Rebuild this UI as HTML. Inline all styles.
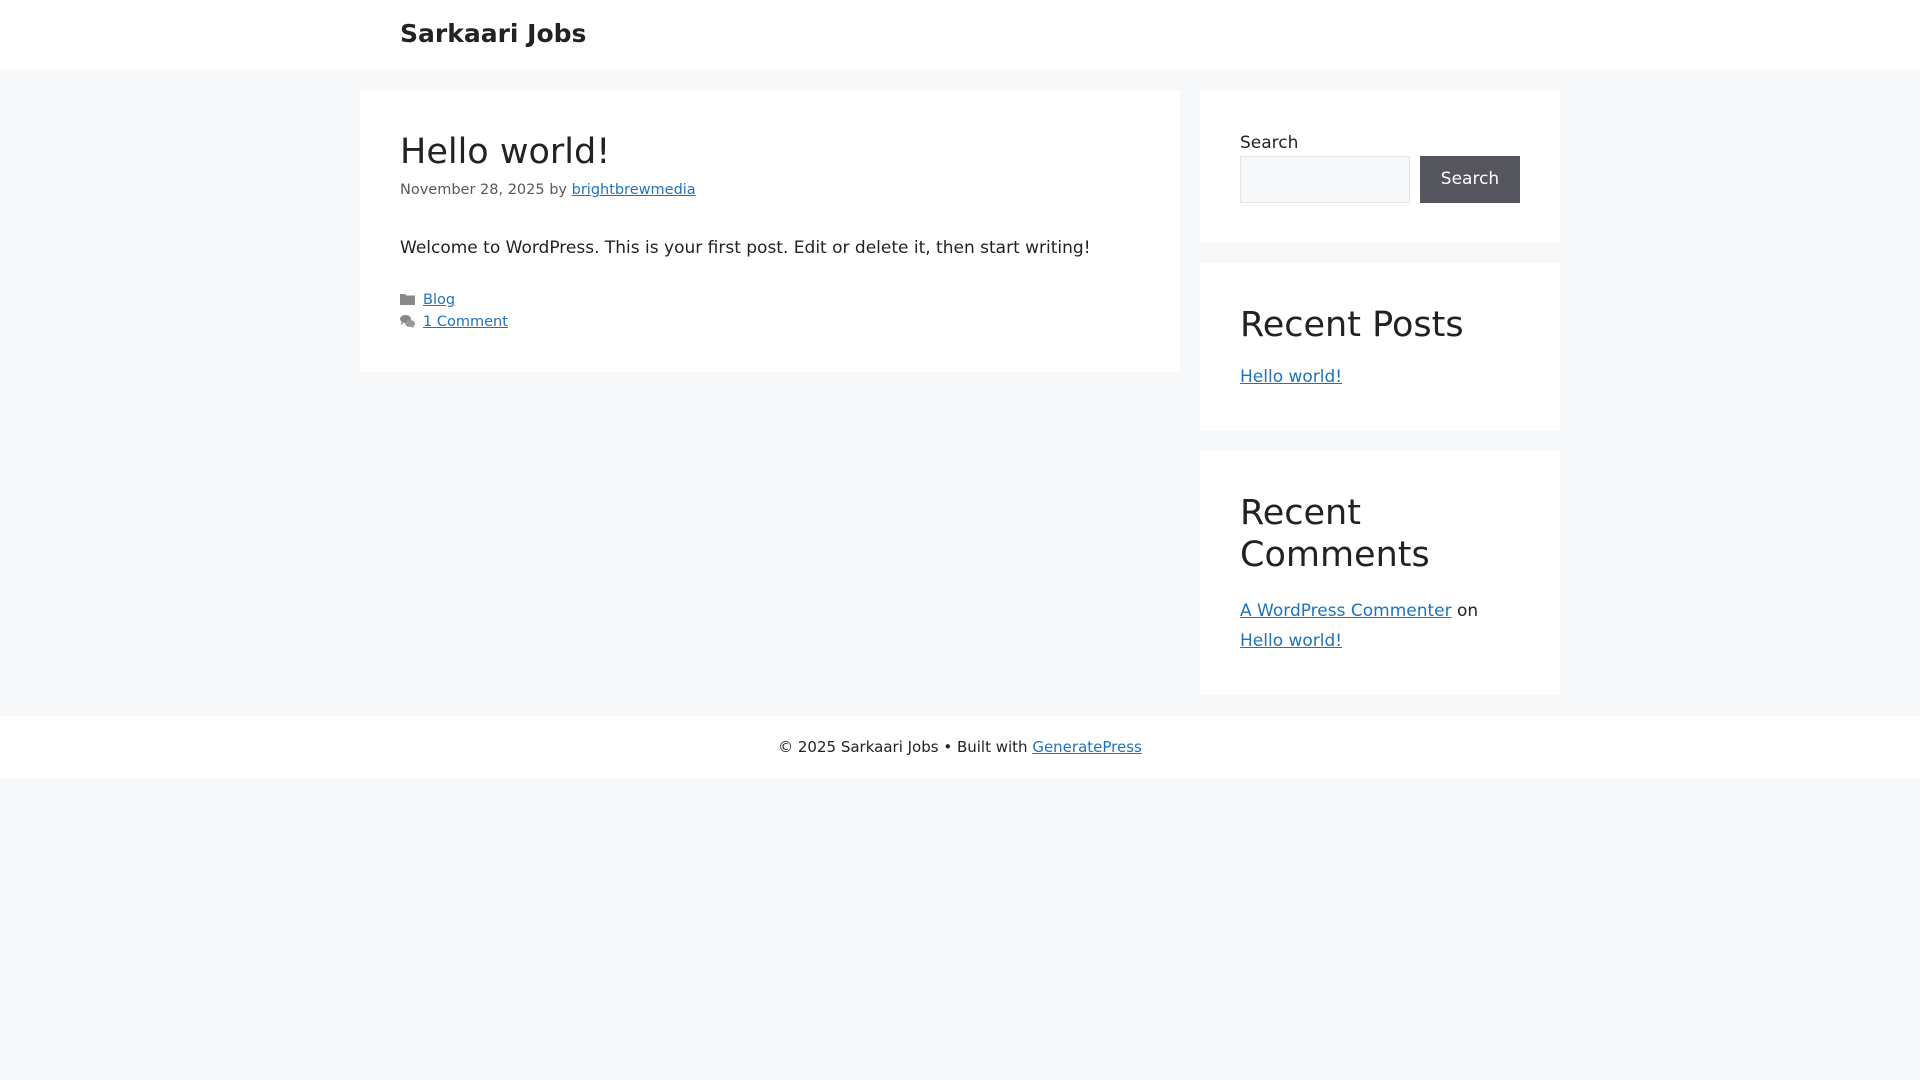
<!DOCTYPE html>
<html><head><meta charset="utf-8"><style>
*{box-sizing:border-box;margin:0;padding:0}
body{width:1920px;height:1080px;background:#f7f8f9;font-family:"DejaVu Sans","Liberation Sans",sans-serif;font-size:17px;line-height:1.5;color:#222;}
a{color:#1e73be;text-decoration:underline}
.header{background:#fff;height:70px}
.header .t{position:absolute;left:400px;top:17px;font-size:25px;font-weight:bold;color:#222;line-height:34px}
.box{position:absolute;background:#fff}
h1{font-weight:normal;font-size:35px;line-height:1.2}
h2{font-weight:normal;font-size:35px;line-height:1.2}
.meta{font-size:14.5px;color:#595959}
.fm{font-size:14.5px;display:flex;align-items:center;gap:8px;height:22px}
.fm svg{position:relative;top:-2px}
.footer{position:absolute;left:0;top:716px;width:1920px;height:62px;background:#fff;text-align:center;font-size:15px;line-height:62px}
</style></head><body>
<div class="header"><div class="t">Sarkaari Jobs</div></div>
<div class="box" style="left:360px;top:90px;width:820px;height:282px;padding:40px">
 <h1 style="margin-top:1px">Hello world!</h1>
 <div class="meta" style="margin-top:7px">November 28, 2025 by <a href="#">brightbrewmedia</a></div>
 <p style="margin-top:34px">Welcome to WordPress. This is your first post. Edit or delete it, then start writing!</p>
 <div style="margin-top:29px">
  <div class="fm"><svg width="15" height="12" viewBox="0 0 15 12"><path d="M0 1h5l1.5 1.5H15V12H0z" fill="#888"/></svg><a href="#">Blog</a></div>
  <div class="fm"><svg width="15" height="13" viewBox="0 0 15 13"><ellipse cx="5.5" cy="4" rx="5.5" ry="4" fill="#888"/><path d="M1.5 7l-1 3 3-2z" fill="#888"/><ellipse cx="10" cy="8.5" rx="5" ry="3.5" fill="#999"/><path d="M13 11l1.5 2-3-1z" fill="#999"/></svg><a href="#">1 Comment</a></div>
 </div>
</div>
<div class="box" style="left:1200px;top:90px;width:360px;height:152px;padding:40px">
 <div style="margin-top:1px">Search</div>
 <div style="position:absolute;left:40px;top:66px;width:170px;height:47px;background:#f7f8f9;border:1px solid #e5e5e5"></div>
 <div style="position:absolute;left:220px;top:66px;width:100px;height:47px;background:#55555e;color:#fff;text-align:center;line-height:47px">Search</div>
</div>
<div class="box" style="left:1200px;top:263px;width:360px;height:168px;padding:40px">
 <h2 style="margin-top:1px">Recent Posts</h2>
 <div style="margin-top:19px"><a href="#">Hello world!</a></div>
</div>
<div class="box" style="left:1200px;top:451px;width:360px;height:244px;padding:40px">
 <h2 style="margin-top:1px">Recent<br>Comments</h2>
 <div style="margin-top:20px;line-height:30px"><a href="#">A WordPress Commenter</a> on<br><a href="#">Hello world!</a></div>
</div>
<div class="footer">© 2025 Sarkaari Jobs • Built with <a href="#">GeneratePress</a></div>
</body></html>
